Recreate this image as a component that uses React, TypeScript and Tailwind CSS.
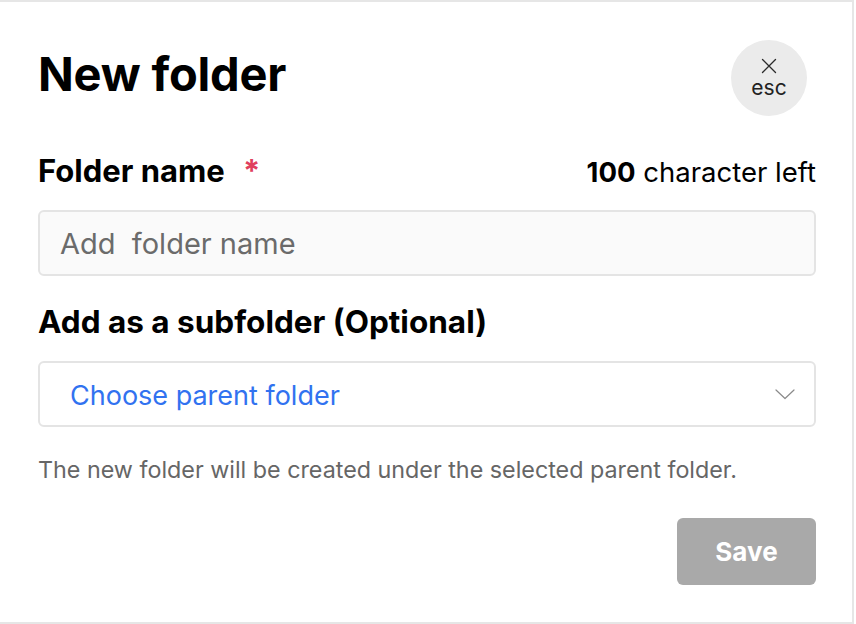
import React from "react";

function CloseIcon() {
  return (
    <svg width="16" height="16" viewBox="0 0 16 16" fill="none" stroke="#2a2a2a" strokeWidth="1.3" strokeLinecap="round">
      <path d="M1.5 1.5 L14.5 14.5 M14.5 1.5 L1.5 14.5" />
    </svg>
  );
}

function Chevron() {
  return (
    <svg width="20" height="11" viewBox="0 0 20 11" fill="none" stroke="#8a8a8a" strokeWidth="1.2" strokeLinecap="round" strokeLinejoin="round">
      <path d="M1 1 L10 9.5 L19 1" />
    </svg>
  );
}

export default function App() {
  return (
    <div className="w-[856px] h-[624px] bg-white" style={{ fontFamily: "Inter, 'Noto Sans', sans-serif" }}>
      <div className="w-[854px] h-[624px] border-t-2 border-r-2 border-b-2 border-[#e6e6e6] flex flex-col pl-[38px] pr-[36px]">
        <div className="flex items-start justify-between pt-[38px]">
          <h1 className="text-[47px] font-bold text-black leading-none tracking-[-0.2px] mt-[10px]">New folder</h1>
          <button className="w-[76px] h-[76px] rounded-full bg-[#ebebeb] flex flex-col items-center justify-center mr-[9px]">
            <CloseIcon />
            <span className="text-[21px] leading-none text-[#222] mt-[3px]">esc</span>
          </button>
        </div>

        <div className="flex items-baseline justify-between mt-[39px]">
          <div className="text-[31px] font-bold text-black leading-none">
            Folder name <span className="text-[#e0405e] ml-[11px]">*</span>
          </div>
          <div className="text-[27.5px] text-black leading-none">
            <span className="font-bold">100</span> character left
          </div>
        </div>

        <div className="mt-[23px] h-[66px] rounded-[6px] border-2 border-[#e4e4e4] bg-[#fafafa] flex items-center pl-[20px] pt-[3px]">
          <span className="text-[29px] text-[#6b6b6b]">Add&nbsp; folder name</span>
        </div>

        <div className="mt-[30px] text-[31.5px] font-bold text-black leading-none">
          Add as a subfolder (Optional)
        </div>

        <div className="mt-[24px] h-[66px] rounded-[6px] border-2 border-[#e4e4e4] bg-white flex items-center justify-between pl-[30px] pr-[19px]">
          <span className="text-[27px] text-[#3172f0] pt-[5px]">Choose parent folder</span>
          <Chevron />
        </div>

        <p className="mt-[31px] text-[23.3px] text-[#666] leading-none">
          The new folder will be created under the selected parent folder.
        </p>

        <div className="flex justify-end mt-[37px]">
          <button className="w-[139px] h-[67px] rounded-[6px] bg-[#a9a9a9] text-white text-[26px] font-bold">
            Save
          </button>
        </div>
      </div>
    </div>
  );
}
